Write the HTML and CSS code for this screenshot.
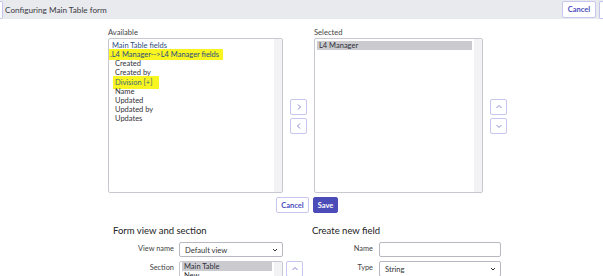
FILE: index.html
```html
<!DOCTYPE html>
<html>
<head>
  <meta charset="UTF-8">
  <title>Configuring Main Table form</title>
  <link rel="stylesheet" href="styles.css">
</head>
<body>
  <div class="topbar">
    <span class="edge-btn"></span>
    <span class="title">Configuring Main Table form</span>
    <button class="btn btn-top">Cancel</button>
    <span class="edge-btn edge-right"></span>
  </div>

  <div class="picker">
    <div class="col col-available">
      <div class="col-label">Available</div>
      <div class="listbox listbox-tall">
        <ul class="items">
          <li class="group">Main Table fields</li>
          <li class="group"><span class="mark mark-wide">.L4 Manager--&gt;L4 Manager fields</span></li>
          <li class="item">Created</li>
          <li class="item">Created by</li>
          <li class="item"><span class="mark mark-item">Division [+]</span></li>
          <li class="item">Name</li>
          <li class="item">Updated</li>
          <li class="item">Updated by</li>
          <li class="item">Updates</li>
        </ul>
        <div class="track"></div>
      </div>
    </div>

    <div class="movers">
      <button class="btn icon-btn"><svg width="8" height="8" viewBox="0 0 8 8"><path d="M3 1.5 L5.5 4 L3 6.5" /></svg></button>
      <button class="btn icon-btn"><svg width="8" height="8" viewBox="0 0 8 8"><path d="M5 1.5 L2.5 4 L5 6.5" /></svg></button>
    </div>

    <div class="col col-selected">
      <div class="col-label">Selected</div>
      <div class="listbox listbox-tall">
        <ul class="items">
          <li class="picked">L4 Manager</li>
        </ul>
        <div class="track"></div>
      </div>
    </div>

    <div class="movers">
      <button class="btn icon-btn"><svg width="8" height="8" viewBox="0 0 8 8"><path d="M1.5 5 L4 2.5 L6.5 5" /></svg></button>
      <button class="btn icon-btn"><svg width="8" height="8" viewBox="0 0 8 8"><path d="M1.5 3 L4 5.5 L6.5 3" /></svg></button>
    </div>
  </div>

  <div class="actions">
    <button class="btn btn-cancel">Cancel</button>
    <button class="btn btn-save">Save</button>
  </div>

  <div class="lower">
    <div class="panel panel-view">
      <h3>Form view and section</h3>
      <div class="row">
        <label>View name</label>
        <div class="select">Default view<svg width="6" height="6" viewBox="0 0 6 6"><path d="M1 2 L3 4 L5 2" /></svg></div>
      </div>
      <div class="row">
        <label>Section</label>
        <div class="listbox listbox-short">
          <ul class="items">
            <li class="picked">Main Table</li>
            <li class="item-flat">New</li>
          </ul>
          <div class="track"></div>
        </div>
        <button class="btn icon-btn up-small"><svg width="8" height="8" viewBox="0 0 8 8"><path d="M1.5 5 L4 2.5 L6.5 5" /></svg></button>
      </div>
    </div>

    <div class="panel panel-new">
      <h3>Create new field</h3>
      <div class="row">
        <label>Name</label>
        <div class="input"></div>
      </div>
      <div class="row">
        <label>Type</label>
        <div class="select select-type">String<svg width="6" height="6" viewBox="0 0 6 6"><path d="M1 2 L3 4 L5 2" /></svg></div>
      </div>
    </div>
  </div>
</body>
</html>
```

FILE: styles.css
```css
/* page */
body {
  margin: 0;
  font-family: Lato, "Open Sans", sans-serif;
  color: #2e2e38;
  background: #fff;
  overflow: hidden;
}

button {
  font-family: inherit;
  cursor: pointer;
}

/* top bar */
.topbar {
  display: flex;
  align-items: center;
  height: 19px;
  background: #e9eaee;
}

.title {
  margin-left: 2px;
  font-size: 8.2px;
  color: #3a3a44;
  flex: 1;
}

.edge-btn {
  width: 2px;
  height: 16px;
  border: 1px solid #c4c4ec;
  border-left: none;
  border-radius: 0 2px 2px 0;
  background: #fff;
}

.edge-right {
  width: 3px;
  border-right: none;
  border-left: 1px solid #c4c4ec;
  border-radius: 2px 0 0 2px;
  margin-left: 3px;
}

.btn {
  border: 1px solid #c6c6ee;
  background: #fff;
  color: #4e4ebf;
  border-radius: 2px;
  padding: 0;
}

.btn-top {
  width: 34px;
  height: 17px;
  font-size: 7.5px;
  font-weight: bold;
}

/* picker */
.picker {
  display: flex;
  align-items: flex-end;
  margin: 9px 0 0 108px;
}

.col-label {
  font-size: 7.6px;
  color: #444;
  height: 9px;
  line-height: 9px;
  margin-bottom: 1px;
}

.listbox {
  display: flex;
  border: 1px solid #c8c8d0;
  border-radius: 2px;
  background: #fff;
}

.col-available .listbox {
  width: 173px;
}

.col-selected .listbox {
  width: 167px;
}

.listbox-tall {
  height: 153px;
}

.items {
  flex: 1;
  list-style: none;
  margin: 0;
  padding: 2px 2px 0 2px;
  font-size: 7.5px;
  line-height: 9.15px;
  white-space: nowrap;
}

.track {
  width: 8px;
  background: #f2f2f4;
}

.group {
  color: #2b4e7e;
  padding-left: 1px;
}

.item {
  padding-left: 4px;
  color: #333338;
}

.mark {
  background: #f8f520;
}

.mark-wide {
  margin-left: -3px;
  padding: 1px 4px 1px 1px;
}

.mark-item {
  color: #3d6a78;
  padding: 2px 7px 2px 2px;
  margin-left: -2px;
}

.picked {
  background: #cbcbcf;
  padding-left: 2px;
}

.movers {
  display: flex;
  flex-direction: column;
  gap: 3px;
  margin: 0 7px 59px 7px;
}

.icon-btn {
  width: 17px;
  height: 16px;
  display: flex;
  align-items: center;
  justify-content: center;
}

.icon-btn svg path {
  fill: none;
  stroke: #7a7ad0;
  stroke-width: 0.9;
}

/* actions */
.actions {
  display: flex;
  gap: 4px;
  margin: 4px 0 0 276px;
}

.btn-cancel {
  width: 33px;
  height: 16px;
  font-size: 7.5px;
  font-weight: bold;
}

.btn-save {
  width: 25px;
  height: 16px;
  font-size: 7.5px;
  font-weight: bold;
  background: #4c4cb8;
  border-color: #4c4cb8;
  color: #fff;
}

/* lower panels */
.lower {
  display: flex;
  margin-top: 11px;
}

.panel h3 {
  margin: 0 0 4px 0;
  font-size: 9.5px;
  font-weight: normal;
  color: #222;
  height: 14px;
  line-height: 14px;
}

.panel-view {
  margin-left: 113px;
  width: 199px;
}

.row {
  display: flex;
  align-items: flex-start;
  margin-bottom: 4px;
}

.row label {
  font-size: 7.4px;
  color: #444;
  text-align: right;
  height: 14px;
  line-height: 14px;
}

.panel-view .row label {
  width: 61px;
  margin-right: 5px;
}

.panel-new .row label {
  width: 61px;
  margin-right: 6px;
}

.select,
.input {
  box-sizing: border-box;
  width: 104px;
  height: 15px;
  border: 1px solid #b8b8c0;
  border-radius: 2px;
  display: flex;
  align-items: center;
  justify-content: space-between;
  padding: 0 4px 0 5px;
  font-size: 7.6px;
  color: #333;
}

.panel-new .input,
.panel-new .select {
  width: 122px;
}

.select-type {
  height: 16px;
}

.select svg path {
  fill: none;
  stroke: #333;
  stroke-width: 1;
}

.listbox-short {
  width: 102px;
  height: 30px;
}

.listbox-short .items {
  padding-top: 0;
  line-height: 9px;
}

.item-flat {
  padding-left: 2px;
}

.up-small {
  margin-left: 3px;
}
```
